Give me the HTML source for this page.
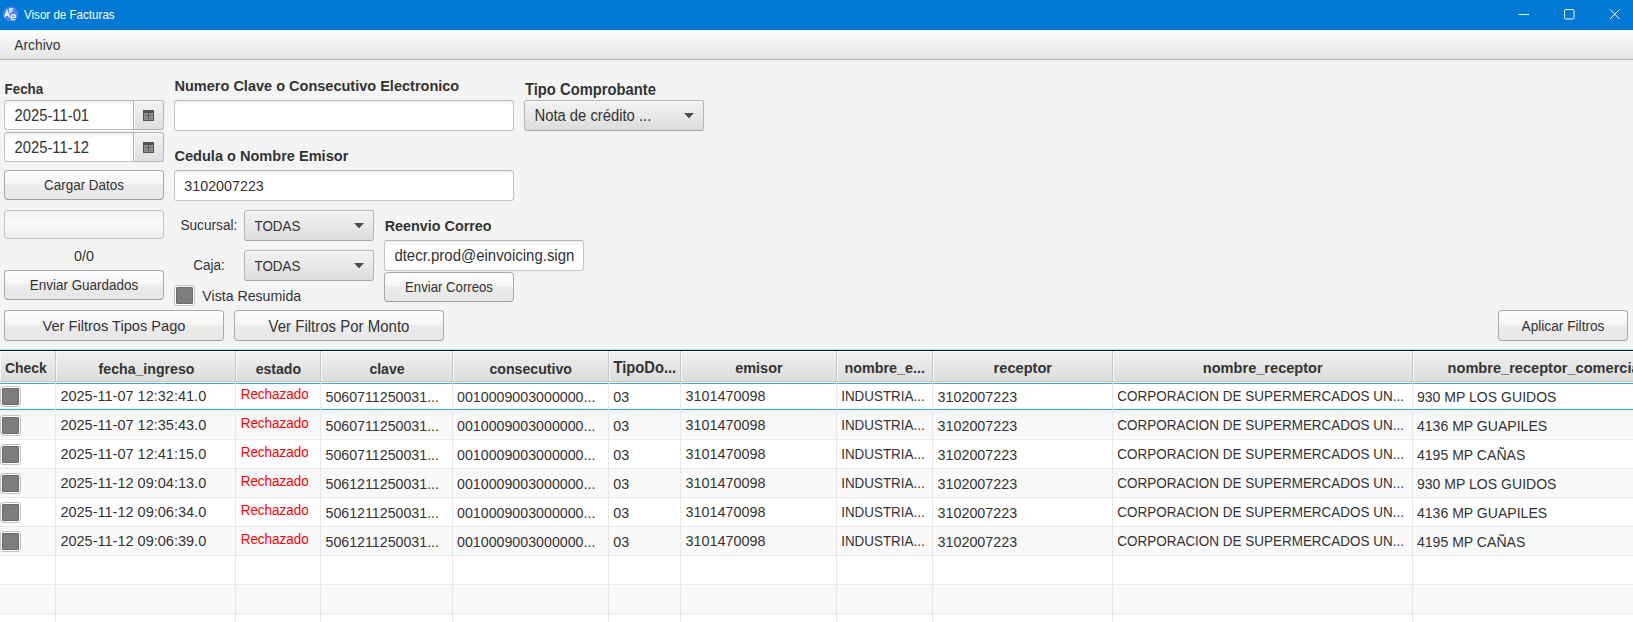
<!DOCTYPE html>
<html><head><meta charset="utf-8"><title>Visor de Facturas</title>
<style>
html,body{margin:0;padding:0}
body{width:1633px;height:622px;overflow:hidden;position:relative;background:#f4f4f4;font-family:'Liberation Sans', sans-serif}
.t{position:absolute;white-space:pre;font-family:'Liberation Sans', sans-serif}
.r{position:absolute}
</style></head><body>
<div class="r" style="left:0px;top:0px;width:1633px;height:30px;background:#0078d4"></div>
<svg class="r" style="left:0px;top:0px" width="24" height="30" viewBox="0 0 24 30">
<circle cx="10.4" cy="14" r="7.6" fill="#4f82ea"/>
<path d="M4.6 17.2 L7 10.8 L9.4 17.2 M5.6 15 L8.4 15" stroke="#fff" stroke-width="1.3" fill="none"/>
<path d="M9.9 13.6 L9.9 8.9 L13.2 8.9 M9.9 11.2 L12.6 11.2" stroke="#fff" stroke-width="1.2" fill="none"/>
<path d="M11.2 17.3 L15.6 17.3 C15.6 15.4 14.6 14.6 13.4 14.6 C12 14.6 11.1 15.7 11.1 17.3 C11.1 19 12.1 20 13.5 20 C14.4 20 15.1 19.6 15.5 19.1" stroke="#fff" stroke-width="1.2" fill="none"/>
</svg>
<div class="t" style="left:24px;top:9.19px;font-size:11.6px;line-height:11.6px;font-weight:400;color:#ffffff;transform:scaleY(1.06);transform-origin:0 9.81px;">Visor de Facturas</div>
<svg class="r" style="left:1500px;top:0" width="133" height="30" viewBox="0 0 133 30">
<line x1="18.5" y1="14.5" x2="29" y2="14.5" stroke="#fff" stroke-width="1"/>
<rect x="64.5" y="9.5" width="9.5" height="9.5" rx="1.2" fill="none" stroke="#fff" stroke-width="1"/>
<path d="M110 9.5 L119.5 19 M119.5 9.5 L110 19" stroke="#fff" stroke-width="1"/>
</svg>
<div class="r" style="left:0px;top:30px;width:1633px;height:29px;background:linear-gradient(#fefefe 0px,#f9f9f9 4px,#e6e6e6 28px,#e9e9e9 29px)"></div>
<div class="r" style="left:0px;top:59px;width:1633px;height:1px;background:#b4b4b4"></div>
<div class="t" style="left:14.3px;top:38.63px;font-size:13.8px;line-height:13.8px;font-weight:400;color:#333333;transform:scaleY(1.06);transform-origin:0 11.67px;">Archivo</div>
<div class="t" style="left:4.5px;top:83.16px;font-size:13.4px;line-height:13.4px;font-weight:700;color:#333333;transform:scaleY(1.06);transform-origin:0 11.34px;">Fecha</div>
<div class="r" style="left:4px;top:100px;width:160px;height:30px;box-sizing:border-box;border:1px solid #c2c2c2;border-top-color:#b4b4b4;border-radius:3px;background:linear-gradient(#efefef 0,#fff 5px)"></div>
<div class="r" style="left:133px;top:100px;width:31px;height:30px;box-sizing:border-box;border:1px solid #b6b6b6;border-radius:0 3px 3px 0;background:linear-gradient(#f3f3f3,#dedede);box-shadow:inset 1px 1px 0 #fafafa"></div>
<svg class="r" style="left:143px;top:110px" width="11" height="11" viewBox="0 0 11 11">
<rect x="0" y="0" width="11" height="11" fill="#525252"/>
<rect x="1" y="3" width="4" height="2.4" fill="#9c9c9c"/><rect x="6" y="3" width="4" height="2.4" fill="#9c9c9c"/>
<rect x="1" y="6" width="4" height="4" fill="#9c9c9c"/><rect x="6" y="6" width="4" height="4" fill="#9c9c9c"/>
<rect x="2.5" y="3" width="1" height="7" fill="#7a7a7a"/><rect x="7.5" y="3" width="1" height="7" fill="#7a7a7a"/>
<rect x="1" y="8" width="9" height="0.8" fill="#7a7a7a"/>
</svg>
<div class="t" style="left:14.5px;top:109.48px;font-size:14.8px;line-height:14.8px;font-weight:400;color:#333333;transform:scaleY(1.06);transform-origin:0 12.52px;">2025-11-01</div>
<div class="r" style="left:4px;top:132px;width:160px;height:30px;box-sizing:border-box;border:1px solid #c2c2c2;border-top-color:#b4b4b4;border-radius:3px;background:linear-gradient(#efefef 0,#fff 5px)"></div>
<div class="r" style="left:133px;top:132px;width:31px;height:30px;box-sizing:border-box;border:1px solid #b6b6b6;border-radius:0 3px 3px 0;background:linear-gradient(#f3f3f3,#dedede);box-shadow:inset 1px 1px 0 #fafafa"></div>
<svg class="r" style="left:143px;top:142px" width="11" height="11" viewBox="0 0 11 11">
<rect x="0" y="0" width="11" height="11" fill="#525252"/>
<rect x="1" y="3" width="4" height="2.4" fill="#9c9c9c"/><rect x="6" y="3" width="4" height="2.4" fill="#9c9c9c"/>
<rect x="1" y="6" width="4" height="4" fill="#9c9c9c"/><rect x="6" y="6" width="4" height="4" fill="#9c9c9c"/>
<rect x="2.5" y="3" width="1" height="7" fill="#7a7a7a"/><rect x="7.5" y="3" width="1" height="7" fill="#7a7a7a"/>
<rect x="1" y="8" width="9" height="0.8" fill="#7a7a7a"/>
</svg>
<div class="t" style="left:14.5px;top:141.48px;font-size:14.8px;line-height:14.8px;font-weight:400;color:#333333;transform:scaleY(1.06);transform-origin:0 12.52px;">2025-11-12</div>
<div class="r" style="left:4px;top:170px;width:160px;height:30px;box-sizing:border-box;border:1px solid #a9a9a9;border-bottom-color:#9c9c9c;border-radius:4px;background:linear-gradient(#fdfdfd 0%,#f5f5f5 47%,#ececec 50%,#e7e7e7 92%,#eaeaea 100%);box-shadow:inset 0 1px 0 #ffffff"></div>
<div class="t" style="left:4px;width:160px;text-align:center;top:178.62px;font-size:13.45px;line-height:13.45px;color:#333;transform:scaleY(1.06);transform-origin:0 11.38px">Cargar Datos</div>
<div class="r" style="left:4px;top:210px;width:160px;height:29px;box-sizing:border-box;border:1px solid #c4c4c4;border-radius:3px;background:linear-gradient(#f0f0f0,#fbfbfb 40%,#eeeeee)"></div>
<div class="t" style="left:4px;width:160px;text-align:center;top:248.90px;font-size:14.3px;line-height:14.3px;color:#333;transform:scaleY(1.06);transform-origin:0 12.1px">0/0</div>
<div class="r" style="left:4px;top:270px;width:160px;height:30px;box-sizing:border-box;border:1px solid #a9a9a9;border-bottom-color:#9c9c9c;border-radius:4px;background:linear-gradient(#fdfdfd 0%,#f5f5f5 47%,#ececec 50%,#e7e7e7 92%,#eaeaea 100%);box-shadow:inset 0 1px 0 #ffffff"></div>
<div class="t" style="left:4px;width:160px;text-align:center;top:278.62px;font-size:13.45px;line-height:13.45px;color:#333;transform:scaleY(1.06);transform-origin:0 11.38px">Enviar Guardados</div>
<div class="t" style="left:174.5px;top:78.71px;font-size:14.53px;line-height:14.53px;font-weight:700;color:#333333;transform:scaleY(1.06);transform-origin:0 12.29px;">Numero Clave o Consecutivo Electronico</div>
<div class="r" style="left:174px;top:100px;width:340px;height:31px;box-sizing:border-box;border:1px solid #c4c4c4;border-top-color:#b8b8b8;border-radius:3px;background:linear-gradient(#f0f0f0 0,#fff 5px)"></div>
<div class="t" style="left:174.5px;top:148.68px;font-size:14.56px;line-height:14.56px;font-weight:700;color:#333333;transform:scaleY(1.06);transform-origin:0 12.32px;">Cedula o Nombre Emisor</div>
<div class="r" style="left:174px;top:170px;width:340px;height:31px;box-sizing:border-box;border:1px solid #c4c4c4;border-top-color:#b8b8b8;border-radius:3px;background:linear-gradient(#f0f0f0 0,#fff 5px)"></div>
<div class="t" style="left:184.3px;top:178.89px;font-size:14.31px;line-height:14.31px;font-weight:400;color:#333333;transform:scaleY(1.06);transform-origin:0 12.11px;">3102007223</div>
<div class="t" style="left:180.4px;top:219.44px;font-size:13.67px;line-height:13.67px;font-weight:400;color:#333333;transform:scaleY(1.06);transform-origin:0 11.56px;">Sucursal:</div>
<div class="r" style="left:244px;top:210px;width:130px;height:31px;box-sizing:border-box;border:1px solid #b5b5b5;border-bottom-color:#a8a8a8;border-radius:3px;background:linear-gradient(#f3f3f3,#dcdcdc);box-shadow:inset 0 1px 0 #fbfbfb"></div>
<div class="t" style="left:254.5px;top:219.65px;font-size:13.42px;line-height:13.42px;font-weight:400;color:#333333;transform:scaleY(1.06);transform-origin:0 11.35px;">TODAS</div>
<svg class="r" style="left:354px;top:222.8px" width="10" height="7" viewBox="0 0 10 7"><path d="M0 1 L10 1 L5 6.4 Z" fill="#fff" opacity="0.6"/><path d="M0 0 L10 0 L5 5.4 Z" fill="#4d4d4d"/></svg>
<div class="t" style="left:193.2px;top:259.19px;font-size:13.49px;line-height:13.49px;font-weight:400;color:#333333;transform:scaleY(1.06);transform-origin:0 11.41px;">Caja:</div>
<div class="r" style="left:244px;top:250px;width:130px;height:31px;box-sizing:border-box;border:1px solid #b5b5b5;border-bottom-color:#a8a8a8;border-radius:3px;background:linear-gradient(#f3f3f3,#dcdcdc);box-shadow:inset 0 1px 0 #fbfbfb"></div>
<div class="t" style="left:254.5px;top:259.65px;font-size:13.42px;line-height:13.42px;font-weight:400;color:#333333;transform:scaleY(1.06);transform-origin:0 11.35px;">TODAS</div>
<svg class="r" style="left:354px;top:262.8px" width="10" height="7" viewBox="0 0 10 7"><path d="M0 1 L10 1 L5 6.4 Z" fill="#fff" opacity="0.6"/><path d="M0 0 L10 0 L5 5.4 Z" fill="#4d4d4d"/></svg>
<div class="r" style="left:174px;top:285px;width:21px;height:21px;box-sizing:border-box;border:1px solid #c2c2c2;border-radius:3px;background:#fcfcfc"></div>
<div class="r" style="left:176px;top:287px;width:17px;height:17px;box-sizing:border-box;border:1px solid #6a6a6a;border-radius:1px;background:#7d7d7d"></div>
<div class="t" style="left:202.3px;top:289.01px;font-size:14.17px;line-height:14.17px;font-weight:400;color:#333333;transform:scaleY(1.06);transform-origin:0 11.99px;">Vista Resumida</div>
<div class="t" style="left:525px;top:82.50px;font-size:14.77px;line-height:14.77px;font-weight:700;color:#333333;transform:scaleY(1.06);transform-origin:0 12.50px;">Tipo Comprobante</div>
<div class="r" style="left:524px;top:100px;width:180px;height:31px;box-sizing:border-box;border:1px solid #b5b5b5;border-bottom-color:#a8a8a8;border-radius:3px;background:linear-gradient(#f3f3f3,#dcdcdc);box-shadow:inset 0 1px 0 #fbfbfb"></div>
<div class="t" style="left:534.5px;top:109.48px;font-size:14.8px;line-height:14.8px;font-weight:400;color:#333333;transform:scaleY(1.06);transform-origin:0 12.52px;">Nota de crédito ...</div>
<svg class="r" style="left:684px;top:112.8px" width="10" height="7" viewBox="0 0 10 7"><path d="M0 1 L10 1 L5 6.4 Z" fill="#fff" opacity="0.6"/><path d="M0 0 L10 0 L5 5.4 Z" fill="#4d4d4d"/></svg>
<div class="t" style="left:384.7px;top:219.34px;font-size:14.37px;line-height:14.37px;font-weight:700;color:#333333;transform:scaleY(1.06);transform-origin:0 12.16px;">Reenvio Correo</div>
<div class="r" style="left:384px;top:240px;width:200px;height:31px;box-sizing:border-box;border:1px solid #c4c4c4;border-top-color:#b8b8b8;border-radius:3px;background:linear-gradient(#f0f0f0 0,#fff 5px)"></div>
<div class="t" style="left:394.4px;top:248.84px;font-size:14.97px;line-height:14.97px;font-weight:400;color:#333333;transform:scaleY(1.06);transform-origin:0 12.66px;">dtecr.prod@einvoicing.sign</div>
<div class="r" style="left:384px;top:272px;width:130px;height:30px;box-sizing:border-box;border:1px solid #a9a9a9;border-bottom-color:#9c9c9c;border-radius:4px;background:linear-gradient(#fdfdfd 0%,#f5f5f5 47%,#ececec 50%,#e7e7e7 92%,#eaeaea 100%);box-shadow:inset 0 1px 0 #ffffff"></div>
<div class="t" style="left:384px;width:130px;text-align:center;top:280.83px;font-size:13.2px;line-height:13.2px;color:#333;transform:scaleY(1.06);transform-origin:0 11.17px">Enviar Correos</div>
<div class="r" style="left:4px;top:310px;width:220px;height:31px;box-sizing:border-box;border:1px solid #a9a9a9;border-bottom-color:#9c9c9c;border-radius:4px;background:linear-gradient(#fdfdfd 0%,#f5f5f5 47%,#ececec 50%,#e7e7e7 92%,#eaeaea 100%);box-shadow:inset 0 1px 0 #ffffff"></div>
<div class="t" style="left:4px;width:220px;text-align:center;top:319.13px;font-size:14.62px;line-height:14.62px;color:#333;transform:scaleY(1.06);transform-origin:0 12.37px">Ver Filtros Tipos Pago</div>
<div class="r" style="left:234px;top:310px;width:210px;height:31px;box-sizing:border-box;border:1px solid #a9a9a9;border-bottom-color:#9c9c9c;border-radius:4px;background:linear-gradient(#fdfdfd 0%,#f5f5f5 47%,#ececec 50%,#e7e7e7 92%,#eaeaea 100%);box-shadow:inset 0 1px 0 #ffffff"></div>
<div class="t" style="left:234px;width:210px;text-align:center;top:318.81px;font-size:15.0px;line-height:15.0px;color:#333;transform:scaleY(1.06);transform-origin:0 12.69px">Ver Filtros Por Monto</div>
<div class="r" style="left:1498px;top:310px;width:130px;height:31px;box-sizing:border-box;border:1px solid #a9a9a9;border-bottom-color:#9c9c9c;border-radius:4px;background:linear-gradient(#fdfdfd 0%,#f5f5f5 47%,#ececec 50%,#e7e7e7 92%,#eaeaea 100%);box-shadow:inset 0 1px 0 #ffffff"></div>
<div class="t" style="left:1498px;width:130px;text-align:center;top:319.71px;font-size:13.7px;line-height:13.7px;color:#333;transform:scaleY(1.06);transform-origin:0 11.59px">Aplicar Filtros</div>
<div class="r" style="left:0px;top:349px;width:1633px;height:1px;background:#aee3f5"></div>
<div class="r" style="left:0px;top:350px;width:1633px;height:1px;background:#0b1a20"></div>
<div class="r" style="left:0px;top:351px;width:1633px;height:271px;background:#ffffff"></div>
<div class="r" style="left:0px;top:351px;width:56px;height:31px;box-sizing:border-box;border-right:1px solid #c8c8c8;border-bottom:1px solid #c8c8c8;background:linear-gradient(#fbfbfb 0,#fbfbfb 1px,#efefef 2px,#dcdcdc 100%);box-shadow:inset 1px 0 0 #f7f7f7"></div>
<div class="t" style="left:5.05px;top:361.82px;font-size:13.93px;line-height:13.93px;font-weight:700;color:#333333;transform:scaleY(1.06);transform-origin:0 11.78px;">Check</div>
<div class="r" style="left:56px;top:351px;width:180px;height:31px;box-sizing:border-box;border-right:1px solid #c8c8c8;border-bottom:1px solid #c8c8c8;background:linear-gradient(#fbfbfb 0,#fbfbfb 1px,#efefef 2px,#dcdcdc 100%);box-shadow:inset 1px 0 0 #f7f7f7"></div>
<div class="t" style="left:98.6px;top:361.65px;font-size:14.13px;line-height:14.13px;font-weight:700;color:#333333;transform:scaleY(1.06);transform-origin:0 11.95px;">fecha_ingreso</div>
<div class="r" style="left:236px;top:351px;width:85px;height:31px;box-sizing:border-box;border-right:1px solid #c8c8c8;border-bottom:1px solid #c8c8c8;background:linear-gradient(#fbfbfb 0,#fbfbfb 1px,#efefef 2px,#dcdcdc 100%);box-shadow:inset 1px 0 0 #f7f7f7"></div>
<div class="t" style="left:255.7px;top:361.68px;font-size:14.09px;line-height:14.09px;font-weight:700;color:#333333;transform:scaleY(1.06);transform-origin:0 11.92px;">estado</div>
<div class="r" style="left:321px;top:351px;width:132px;height:31px;box-sizing:border-box;border-right:1px solid #c8c8c8;border-bottom:1px solid #c8c8c8;background:linear-gradient(#fbfbfb 0,#fbfbfb 1px,#efefef 2px,#dcdcdc 100%);box-shadow:inset 1px 0 0 #f7f7f7"></div>
<div class="t" style="left:369.4px;top:361.70px;font-size:14.07px;line-height:14.07px;font-weight:700;color:#333333;transform:scaleY(1.06);transform-origin:0 11.90px;">clave</div>
<div class="r" style="left:453px;top:351px;width:156px;height:31px;box-sizing:border-box;border-right:1px solid #c8c8c8;border-bottom:1px solid #c8c8c8;background:linear-gradient(#fbfbfb 0,#fbfbfb 1px,#efefef 2px,#dcdcdc 100%);box-shadow:inset 1px 0 0 #f7f7f7"></div>
<div class="t" style="left:489.4px;top:361.61px;font-size:14.17px;line-height:14.17px;font-weight:700;color:#333333;transform:scaleY(1.06);transform-origin:0 11.99px;">consecutivo</div>
<div class="r" style="left:609px;top:351px;width:72px;height:31px;box-sizing:border-box;border-right:1px solid #c8c8c8;border-bottom:1px solid #c8c8c8;background:linear-gradient(#fbfbfb 0,#fbfbfb 1px,#efefef 2px,#dcdcdc 100%);box-shadow:inset 1px 0 0 #f7f7f7"></div>
<div class="t" style="left:613.4px;top:361.12px;font-size:14.75px;line-height:14.75px;font-weight:700;color:#333333;transform:scaleY(1.06);transform-origin:0 12.48px;">TipoDo...</div>
<div class="r" style="left:681px;top:351px;width:156px;height:31px;box-sizing:border-box;border-right:1px solid #c8c8c8;border-bottom:1px solid #c8c8c8;background:linear-gradient(#fbfbfb 0,#fbfbfb 1px,#efefef 2px,#dcdcdc 100%);box-shadow:inset 1px 0 0 #f7f7f7"></div>
<div class="t" style="left:735.2px;top:361.35px;font-size:14.48px;line-height:14.48px;font-weight:700;color:#333333;transform:scaleY(1.06);transform-origin:0 12.25px;">emisor</div>
<div class="r" style="left:837px;top:351px;width:96px;height:31px;box-sizing:border-box;border-right:1px solid #c8c8c8;border-bottom:1px solid #c8c8c8;background:linear-gradient(#fbfbfb 0,#fbfbfb 1px,#efefef 2px,#dcdcdc 100%);box-shadow:inset 1px 0 0 #f7f7f7"></div>
<div class="t" style="left:844.5px;top:361.47px;font-size:14.34px;line-height:14.34px;font-weight:700;color:#333333;transform:scaleY(1.06);transform-origin:0 12.13px;">nombre_e...</div>
<div class="r" style="left:933px;top:351px;width:180px;height:31px;box-sizing:border-box;border-right:1px solid #c8c8c8;border-bottom:1px solid #c8c8c8;background:linear-gradient(#fbfbfb 0,#fbfbfb 1px,#efefef 2px,#dcdcdc 100%);box-shadow:inset 1px 0 0 #f7f7f7"></div>
<div class="t" style="left:993.6px;top:361.23px;font-size:14.62px;line-height:14.62px;font-weight:700;color:#333333;transform:scaleY(1.06);transform-origin:0 12.37px;">receptor</div>
<div class="r" style="left:1113px;top:351px;width:300px;height:31px;box-sizing:border-box;border-right:1px solid #c8c8c8;border-bottom:1px solid #c8c8c8;background:linear-gradient(#fbfbfb 0,#fbfbfb 1px,#efefef 2px,#dcdcdc 100%);box-shadow:inset 1px 0 0 #f7f7f7"></div>
<div class="t" style="left:1202.8px;top:361.26px;font-size:14.59px;line-height:14.59px;font-weight:700;color:#333333;transform:scaleY(1.06);transform-origin:0 12.34px;">nombre_receptor</div>
<div class="r" style="left:1413px;top:351px;width:387px;height:31px;box-sizing:border-box;border-right:1px solid #c8c8c8;border-bottom:1px solid #c8c8c8;background:linear-gradient(#fbfbfb 0,#fbfbfb 1px,#efefef 2px,#dcdcdc 100%);box-shadow:inset 1px 0 0 #f7f7f7"></div>
<div class="t" style="left:1447.6px;top:361.26px;font-size:14.59px;line-height:14.59px;font-weight:700;color:#333333;transform:scaleY(1.06);transform-origin:0 12.34px;">nombre_receptor_comercial</div>
<div class="r" style="left:0px;top:382px;width:1633px;height:29px;background:#ffffff"></div>
<div class="r" style="left:0px;top:410px;width:1633px;height:1px;background:#eaeaea"></div>
<div class="r" style="left:0px;top:383px;width:1633px;height:1px;background:#39aee0"></div>
<div class="r" style="left:0px;top:409px;width:1633px;height:1px;background:#39aee0"></div>
<div class="r" style="left:55px;top:382px;width:1px;height:29px;background:#e8e8e8"></div>
<div class="r" style="left:235px;top:382px;width:1px;height:29px;background:#e8e8e8"></div>
<div class="r" style="left:320px;top:382px;width:1px;height:29px;background:#e8e8e8"></div>
<div class="r" style="left:452px;top:382px;width:1px;height:29px;background:#e8e8e8"></div>
<div class="r" style="left:608px;top:382px;width:1px;height:29px;background:#e8e8e8"></div>
<div class="r" style="left:680px;top:382px;width:1px;height:29px;background:#e8e8e8"></div>
<div class="r" style="left:836px;top:382px;width:1px;height:29px;background:#e8e8e8"></div>
<div class="r" style="left:932px;top:382px;width:1px;height:29px;background:#e8e8e8"></div>
<div class="r" style="left:1112px;top:382px;width:1px;height:29px;background:#e8e8e8"></div>
<div class="r" style="left:1412px;top:382px;width:1px;height:29px;background:#e8e8e8"></div>
<div class="r" style="left:0px;top:386px;width:21px;height:21px;box-sizing:border-box;border:1px solid #c2c2c2;border-radius:3px;background:#fcfcfc"></div>
<div class="r" style="left:2px;top:388px;width:17px;height:17px;box-sizing:border-box;border:1px solid #6a6a6a;border-radius:1px;background:#7d7d7d"></div>
<div class="t" style="left:60.4px;top:389.31px;font-size:14.53px;line-height:14.53px;font-weight:400;color:#333333;transform:scaleY(1.06);transform-origin:0 12.29px;">2025-11-07 12:32:41.0</div>
<div class="t" style="left:240.7px;top:387.83px;font-size:13.44px;line-height:13.44px;font-weight:400;color:#ff0000;transform:scaleY(1.06);transform-origin:0 11.37px;">Rechazado</div>
<div class="t" style="left:325.5px;top:389.58px;font-size:14.21px;line-height:14.21px;font-weight:400;color:#333333;transform:scaleY(1.06);transform-origin:0 12.02px;">5060711250031...</div>
<div class="t" style="left:457px;top:389.56px;font-size:14.23px;line-height:14.23px;font-weight:400;color:#333333;transform:scaleY(1.06);transform-origin:0 12.04px;">0010009003000000...</div>
<div class="t" style="left:613.3px;top:389.50px;font-size:14.3px;line-height:14.3px;font-weight:400;color:#333333;transform:scaleY(1.06);transform-origin:0 12.10px;">03</div>
<div class="t" style="left:685.5px;top:389.43px;font-size:14.38px;line-height:14.38px;font-weight:400;color:#333333;transform:scaleY(1.06);transform-origin:0 12.17px;">3101470098</div>
<div class="t" style="left:841.2px;top:390.25px;font-size:13.42px;line-height:13.42px;font-weight:400;color:#333333;transform:scaleY(1.06);transform-origin:0 11.35px;">INDUSTRIA...</div>
<div class="t" style="left:937.6px;top:389.50px;font-size:14.3px;line-height:14.3px;font-weight:400;color:#333333;transform:scaleY(1.06);transform-origin:0 12.10px;">3102007223</div>
<div class="t" style="left:1117.3px;top:390.20px;font-size:13.47px;line-height:13.47px;font-weight:400;color:#333333;transform:scaleY(1.06);transform-origin:0 11.40px;">CORPORACION DE SUPERMERCADOS UN...</div>
<div class="t" style="left:1417px;top:389.71px;font-size:14.05px;line-height:14.05px;font-weight:400;color:#333333;transform:scaleY(1.06);transform-origin:0 11.89px;">930 MP LOS GUIDOS</div>
<div class="r" style="left:0px;top:411px;width:1633px;height:29px;background:#f9f9f9"></div>
<div class="r" style="left:0px;top:439px;width:1633px;height:1px;background:#eaeaea"></div>
<div class="r" style="left:55px;top:411px;width:1px;height:28px;background:#e8e8e8"></div>
<div class="r" style="left:235px;top:411px;width:1px;height:28px;background:#e8e8e8"></div>
<div class="r" style="left:320px;top:411px;width:1px;height:28px;background:#e8e8e8"></div>
<div class="r" style="left:452px;top:411px;width:1px;height:28px;background:#e8e8e8"></div>
<div class="r" style="left:608px;top:411px;width:1px;height:28px;background:#e8e8e8"></div>
<div class="r" style="left:680px;top:411px;width:1px;height:28px;background:#e8e8e8"></div>
<div class="r" style="left:836px;top:411px;width:1px;height:28px;background:#e8e8e8"></div>
<div class="r" style="left:932px;top:411px;width:1px;height:28px;background:#e8e8e8"></div>
<div class="r" style="left:1112px;top:411px;width:1px;height:28px;background:#e8e8e8"></div>
<div class="r" style="left:1412px;top:411px;width:1px;height:28px;background:#e8e8e8"></div>
<div class="r" style="left:0px;top:415px;width:21px;height:21px;box-sizing:border-box;border:1px solid #c2c2c2;border-radius:3px;background:#fcfcfc"></div>
<div class="r" style="left:2px;top:417px;width:17px;height:17px;box-sizing:border-box;border:1px solid #6a6a6a;border-radius:1px;background:#7d7d7d"></div>
<div class="t" style="left:60.4px;top:418.31px;font-size:14.53px;line-height:14.53px;font-weight:400;color:#333333;transform:scaleY(1.06);transform-origin:0 12.29px;">2025-11-07 12:35:43.0</div>
<div class="t" style="left:240.7px;top:416.83px;font-size:13.44px;line-height:13.44px;font-weight:400;color:#ff0000;transform:scaleY(1.06);transform-origin:0 11.37px;">Rechazado</div>
<div class="t" style="left:325.5px;top:418.58px;font-size:14.21px;line-height:14.21px;font-weight:400;color:#333333;transform:scaleY(1.06);transform-origin:0 12.02px;">5060711250031...</div>
<div class="t" style="left:457px;top:418.56px;font-size:14.23px;line-height:14.23px;font-weight:400;color:#333333;transform:scaleY(1.06);transform-origin:0 12.04px;">0010009003000000...</div>
<div class="t" style="left:613.3px;top:418.50px;font-size:14.3px;line-height:14.3px;font-weight:400;color:#333333;transform:scaleY(1.06);transform-origin:0 12.10px;">03</div>
<div class="t" style="left:685.5px;top:418.43px;font-size:14.38px;line-height:14.38px;font-weight:400;color:#333333;transform:scaleY(1.06);transform-origin:0 12.17px;">3101470098</div>
<div class="t" style="left:841.2px;top:419.25px;font-size:13.42px;line-height:13.42px;font-weight:400;color:#333333;transform:scaleY(1.06);transform-origin:0 11.35px;">INDUSTRIA...</div>
<div class="t" style="left:937.6px;top:418.50px;font-size:14.3px;line-height:14.3px;font-weight:400;color:#333333;transform:scaleY(1.06);transform-origin:0 12.10px;">3102007223</div>
<div class="t" style="left:1117.3px;top:419.20px;font-size:13.47px;line-height:13.47px;font-weight:400;color:#333333;transform:scaleY(1.06);transform-origin:0 11.40px;">CORPORACION DE SUPERMERCADOS UN...</div>
<div class="t" style="left:1417px;top:418.71px;font-size:14.05px;line-height:14.05px;font-weight:400;color:#333333;transform:scaleY(1.06);transform-origin:0 11.89px;">4136 MP GUAPILES</div>
<div class="r" style="left:0px;top:440px;width:1633px;height:29px;background:#ffffff"></div>
<div class="r" style="left:0px;top:468px;width:1633px;height:1px;background:#eaeaea"></div>
<div class="r" style="left:55px;top:440px;width:1px;height:28px;background:#e8e8e8"></div>
<div class="r" style="left:235px;top:440px;width:1px;height:28px;background:#e8e8e8"></div>
<div class="r" style="left:320px;top:440px;width:1px;height:28px;background:#e8e8e8"></div>
<div class="r" style="left:452px;top:440px;width:1px;height:28px;background:#e8e8e8"></div>
<div class="r" style="left:608px;top:440px;width:1px;height:28px;background:#e8e8e8"></div>
<div class="r" style="left:680px;top:440px;width:1px;height:28px;background:#e8e8e8"></div>
<div class="r" style="left:836px;top:440px;width:1px;height:28px;background:#e8e8e8"></div>
<div class="r" style="left:932px;top:440px;width:1px;height:28px;background:#e8e8e8"></div>
<div class="r" style="left:1112px;top:440px;width:1px;height:28px;background:#e8e8e8"></div>
<div class="r" style="left:1412px;top:440px;width:1px;height:28px;background:#e8e8e8"></div>
<div class="r" style="left:0px;top:444px;width:21px;height:21px;box-sizing:border-box;border:1px solid #c2c2c2;border-radius:3px;background:#fcfcfc"></div>
<div class="r" style="left:2px;top:446px;width:17px;height:17px;box-sizing:border-box;border:1px solid #6a6a6a;border-radius:1px;background:#7d7d7d"></div>
<div class="t" style="left:60.4px;top:447.31px;font-size:14.53px;line-height:14.53px;font-weight:400;color:#333333;transform:scaleY(1.06);transform-origin:0 12.29px;">2025-11-07 12:41:15.0</div>
<div class="t" style="left:240.7px;top:445.83px;font-size:13.44px;line-height:13.44px;font-weight:400;color:#ff0000;transform:scaleY(1.06);transform-origin:0 11.37px;">Rechazado</div>
<div class="t" style="left:325.5px;top:447.58px;font-size:14.21px;line-height:14.21px;font-weight:400;color:#333333;transform:scaleY(1.06);transform-origin:0 12.02px;">5060711250031...</div>
<div class="t" style="left:457px;top:447.56px;font-size:14.23px;line-height:14.23px;font-weight:400;color:#333333;transform:scaleY(1.06);transform-origin:0 12.04px;">0010009003000000...</div>
<div class="t" style="left:613.3px;top:447.50px;font-size:14.3px;line-height:14.3px;font-weight:400;color:#333333;transform:scaleY(1.06);transform-origin:0 12.10px;">03</div>
<div class="t" style="left:685.5px;top:447.43px;font-size:14.38px;line-height:14.38px;font-weight:400;color:#333333;transform:scaleY(1.06);transform-origin:0 12.17px;">3101470098</div>
<div class="t" style="left:841.2px;top:448.25px;font-size:13.42px;line-height:13.42px;font-weight:400;color:#333333;transform:scaleY(1.06);transform-origin:0 11.35px;">INDUSTRIA...</div>
<div class="t" style="left:937.6px;top:447.50px;font-size:14.3px;line-height:14.3px;font-weight:400;color:#333333;transform:scaleY(1.06);transform-origin:0 12.10px;">3102007223</div>
<div class="t" style="left:1117.3px;top:448.20px;font-size:13.47px;line-height:13.47px;font-weight:400;color:#333333;transform:scaleY(1.06);transform-origin:0 11.40px;">CORPORACION DE SUPERMERCADOS UN...</div>
<div class="t" style="left:1417px;top:447.71px;font-size:14.05px;line-height:14.05px;font-weight:400;color:#333333;transform:scaleY(1.06);transform-origin:0 11.89px;">4195 MP CAÑAS</div>
<div class="r" style="left:0px;top:469px;width:1633px;height:29px;background:#f9f9f9"></div>
<div class="r" style="left:0px;top:497px;width:1633px;height:1px;background:#eaeaea"></div>
<div class="r" style="left:55px;top:469px;width:1px;height:28px;background:#e8e8e8"></div>
<div class="r" style="left:235px;top:469px;width:1px;height:28px;background:#e8e8e8"></div>
<div class="r" style="left:320px;top:469px;width:1px;height:28px;background:#e8e8e8"></div>
<div class="r" style="left:452px;top:469px;width:1px;height:28px;background:#e8e8e8"></div>
<div class="r" style="left:608px;top:469px;width:1px;height:28px;background:#e8e8e8"></div>
<div class="r" style="left:680px;top:469px;width:1px;height:28px;background:#e8e8e8"></div>
<div class="r" style="left:836px;top:469px;width:1px;height:28px;background:#e8e8e8"></div>
<div class="r" style="left:932px;top:469px;width:1px;height:28px;background:#e8e8e8"></div>
<div class="r" style="left:1112px;top:469px;width:1px;height:28px;background:#e8e8e8"></div>
<div class="r" style="left:1412px;top:469px;width:1px;height:28px;background:#e8e8e8"></div>
<div class="r" style="left:0px;top:473px;width:21px;height:21px;box-sizing:border-box;border:1px solid #c2c2c2;border-radius:3px;background:#fcfcfc"></div>
<div class="r" style="left:2px;top:475px;width:17px;height:17px;box-sizing:border-box;border:1px solid #6a6a6a;border-radius:1px;background:#7d7d7d"></div>
<div class="t" style="left:60.4px;top:476.31px;font-size:14.53px;line-height:14.53px;font-weight:400;color:#333333;transform:scaleY(1.06);transform-origin:0 12.29px;">2025-11-12 09:04:13.0</div>
<div class="t" style="left:240.7px;top:474.83px;font-size:13.44px;line-height:13.44px;font-weight:400;color:#ff0000;transform:scaleY(1.06);transform-origin:0 11.37px;">Rechazado</div>
<div class="t" style="left:325.5px;top:476.58px;font-size:14.21px;line-height:14.21px;font-weight:400;color:#333333;transform:scaleY(1.06);transform-origin:0 12.02px;">5061211250031...</div>
<div class="t" style="left:457px;top:476.56px;font-size:14.23px;line-height:14.23px;font-weight:400;color:#333333;transform:scaleY(1.06);transform-origin:0 12.04px;">0010009003000000...</div>
<div class="t" style="left:613.3px;top:476.50px;font-size:14.3px;line-height:14.3px;font-weight:400;color:#333333;transform:scaleY(1.06);transform-origin:0 12.10px;">03</div>
<div class="t" style="left:685.5px;top:476.43px;font-size:14.38px;line-height:14.38px;font-weight:400;color:#333333;transform:scaleY(1.06);transform-origin:0 12.17px;">3101470098</div>
<div class="t" style="left:841.2px;top:477.25px;font-size:13.42px;line-height:13.42px;font-weight:400;color:#333333;transform:scaleY(1.06);transform-origin:0 11.35px;">INDUSTRIA...</div>
<div class="t" style="left:937.6px;top:476.50px;font-size:14.3px;line-height:14.3px;font-weight:400;color:#333333;transform:scaleY(1.06);transform-origin:0 12.10px;">3102007223</div>
<div class="t" style="left:1117.3px;top:477.20px;font-size:13.47px;line-height:13.47px;font-weight:400;color:#333333;transform:scaleY(1.06);transform-origin:0 11.40px;">CORPORACION DE SUPERMERCADOS UN...</div>
<div class="t" style="left:1417px;top:476.71px;font-size:14.05px;line-height:14.05px;font-weight:400;color:#333333;transform:scaleY(1.06);transform-origin:0 11.89px;">930 MP LOS GUIDOS</div>
<div class="r" style="left:0px;top:498px;width:1633px;height:29px;background:#ffffff"></div>
<div class="r" style="left:0px;top:526px;width:1633px;height:1px;background:#eaeaea"></div>
<div class="r" style="left:55px;top:498px;width:1px;height:28px;background:#e8e8e8"></div>
<div class="r" style="left:235px;top:498px;width:1px;height:28px;background:#e8e8e8"></div>
<div class="r" style="left:320px;top:498px;width:1px;height:28px;background:#e8e8e8"></div>
<div class="r" style="left:452px;top:498px;width:1px;height:28px;background:#e8e8e8"></div>
<div class="r" style="left:608px;top:498px;width:1px;height:28px;background:#e8e8e8"></div>
<div class="r" style="left:680px;top:498px;width:1px;height:28px;background:#e8e8e8"></div>
<div class="r" style="left:836px;top:498px;width:1px;height:28px;background:#e8e8e8"></div>
<div class="r" style="left:932px;top:498px;width:1px;height:28px;background:#e8e8e8"></div>
<div class="r" style="left:1112px;top:498px;width:1px;height:28px;background:#e8e8e8"></div>
<div class="r" style="left:1412px;top:498px;width:1px;height:28px;background:#e8e8e8"></div>
<div class="r" style="left:0px;top:502px;width:21px;height:21px;box-sizing:border-box;border:1px solid #c2c2c2;border-radius:3px;background:#fcfcfc"></div>
<div class="r" style="left:2px;top:504px;width:17px;height:17px;box-sizing:border-box;border:1px solid #6a6a6a;border-radius:1px;background:#7d7d7d"></div>
<div class="t" style="left:60.4px;top:505.31px;font-size:14.53px;line-height:14.53px;font-weight:400;color:#333333;transform:scaleY(1.06);transform-origin:0 12.29px;">2025-11-12 09:06:34.0</div>
<div class="t" style="left:240.7px;top:503.83px;font-size:13.44px;line-height:13.44px;font-weight:400;color:#ff0000;transform:scaleY(1.06);transform-origin:0 11.37px;">Rechazado</div>
<div class="t" style="left:325.5px;top:505.58px;font-size:14.21px;line-height:14.21px;font-weight:400;color:#333333;transform:scaleY(1.06);transform-origin:0 12.02px;">5061211250031...</div>
<div class="t" style="left:457px;top:505.56px;font-size:14.23px;line-height:14.23px;font-weight:400;color:#333333;transform:scaleY(1.06);transform-origin:0 12.04px;">0010009003000000...</div>
<div class="t" style="left:613.3px;top:505.50px;font-size:14.3px;line-height:14.3px;font-weight:400;color:#333333;transform:scaleY(1.06);transform-origin:0 12.10px;">03</div>
<div class="t" style="left:685.5px;top:505.43px;font-size:14.38px;line-height:14.38px;font-weight:400;color:#333333;transform:scaleY(1.06);transform-origin:0 12.17px;">3101470098</div>
<div class="t" style="left:841.2px;top:506.25px;font-size:13.42px;line-height:13.42px;font-weight:400;color:#333333;transform:scaleY(1.06);transform-origin:0 11.35px;">INDUSTRIA...</div>
<div class="t" style="left:937.6px;top:505.50px;font-size:14.3px;line-height:14.3px;font-weight:400;color:#333333;transform:scaleY(1.06);transform-origin:0 12.10px;">3102007223</div>
<div class="t" style="left:1117.3px;top:506.20px;font-size:13.47px;line-height:13.47px;font-weight:400;color:#333333;transform:scaleY(1.06);transform-origin:0 11.40px;">CORPORACION DE SUPERMERCADOS UN...</div>
<div class="t" style="left:1417px;top:505.71px;font-size:14.05px;line-height:14.05px;font-weight:400;color:#333333;transform:scaleY(1.06);transform-origin:0 11.89px;">4136 MP GUAPILES</div>
<div class="r" style="left:0px;top:527px;width:1633px;height:29px;background:#f9f9f9"></div>
<div class="r" style="left:0px;top:555px;width:1633px;height:1px;background:#eaeaea"></div>
<div class="r" style="left:55px;top:527px;width:1px;height:28px;background:#e8e8e8"></div>
<div class="r" style="left:235px;top:527px;width:1px;height:28px;background:#e8e8e8"></div>
<div class="r" style="left:320px;top:527px;width:1px;height:28px;background:#e8e8e8"></div>
<div class="r" style="left:452px;top:527px;width:1px;height:28px;background:#e8e8e8"></div>
<div class="r" style="left:608px;top:527px;width:1px;height:28px;background:#e8e8e8"></div>
<div class="r" style="left:680px;top:527px;width:1px;height:28px;background:#e8e8e8"></div>
<div class="r" style="left:836px;top:527px;width:1px;height:28px;background:#e8e8e8"></div>
<div class="r" style="left:932px;top:527px;width:1px;height:28px;background:#e8e8e8"></div>
<div class="r" style="left:1112px;top:527px;width:1px;height:28px;background:#e8e8e8"></div>
<div class="r" style="left:1412px;top:527px;width:1px;height:28px;background:#e8e8e8"></div>
<div class="r" style="left:0px;top:531px;width:21px;height:21px;box-sizing:border-box;border:1px solid #c2c2c2;border-radius:3px;background:#fcfcfc"></div>
<div class="r" style="left:2px;top:533px;width:17px;height:17px;box-sizing:border-box;border:1px solid #6a6a6a;border-radius:1px;background:#7d7d7d"></div>
<div class="t" style="left:60.4px;top:534.31px;font-size:14.53px;line-height:14.53px;font-weight:400;color:#333333;transform:scaleY(1.06);transform-origin:0 12.29px;">2025-11-12 09:06:39.0</div>
<div class="t" style="left:240.7px;top:532.83px;font-size:13.44px;line-height:13.44px;font-weight:400;color:#ff0000;transform:scaleY(1.06);transform-origin:0 11.37px;">Rechazado</div>
<div class="t" style="left:325.5px;top:534.58px;font-size:14.21px;line-height:14.21px;font-weight:400;color:#333333;transform:scaleY(1.06);transform-origin:0 12.02px;">5061211250031...</div>
<div class="t" style="left:457px;top:534.56px;font-size:14.23px;line-height:14.23px;font-weight:400;color:#333333;transform:scaleY(1.06);transform-origin:0 12.04px;">0010009003000000...</div>
<div class="t" style="left:613.3px;top:534.50px;font-size:14.3px;line-height:14.3px;font-weight:400;color:#333333;transform:scaleY(1.06);transform-origin:0 12.10px;">03</div>
<div class="t" style="left:685.5px;top:534.43px;font-size:14.38px;line-height:14.38px;font-weight:400;color:#333333;transform:scaleY(1.06);transform-origin:0 12.17px;">3101470098</div>
<div class="t" style="left:841.2px;top:535.25px;font-size:13.42px;line-height:13.42px;font-weight:400;color:#333333;transform:scaleY(1.06);transform-origin:0 11.35px;">INDUSTRIA...</div>
<div class="t" style="left:937.6px;top:534.50px;font-size:14.3px;line-height:14.3px;font-weight:400;color:#333333;transform:scaleY(1.06);transform-origin:0 12.10px;">3102007223</div>
<div class="t" style="left:1117.3px;top:535.20px;font-size:13.47px;line-height:13.47px;font-weight:400;color:#333333;transform:scaleY(1.06);transform-origin:0 11.40px;">CORPORACION DE SUPERMERCADOS UN...</div>
<div class="t" style="left:1417px;top:534.71px;font-size:14.05px;line-height:14.05px;font-weight:400;color:#333333;transform:scaleY(1.06);transform-origin:0 11.89px;">4195 MP CAÑAS</div>
<div class="r" style="left:0px;top:556px;width:1633px;height:29px;background:#ffffff"></div>
<div class="r" style="left:0px;top:584px;width:1633px;height:1px;background:#eaeaea"></div>
<div class="r" style="left:55px;top:556px;width:1px;height:28px;background:#e8e8e8"></div>
<div class="r" style="left:235px;top:556px;width:1px;height:28px;background:#e8e8e8"></div>
<div class="r" style="left:320px;top:556px;width:1px;height:28px;background:#e8e8e8"></div>
<div class="r" style="left:452px;top:556px;width:1px;height:28px;background:#e8e8e8"></div>
<div class="r" style="left:608px;top:556px;width:1px;height:28px;background:#e8e8e8"></div>
<div class="r" style="left:680px;top:556px;width:1px;height:28px;background:#e8e8e8"></div>
<div class="r" style="left:836px;top:556px;width:1px;height:28px;background:#e8e8e8"></div>
<div class="r" style="left:932px;top:556px;width:1px;height:28px;background:#e8e8e8"></div>
<div class="r" style="left:1112px;top:556px;width:1px;height:28px;background:#e8e8e8"></div>
<div class="r" style="left:1412px;top:556px;width:1px;height:28px;background:#e8e8e8"></div>
<div class="r" style="left:0px;top:585px;width:1633px;height:29px;background:#f9f9f9"></div>
<div class="r" style="left:0px;top:613px;width:1633px;height:1px;background:#eaeaea"></div>
<div class="r" style="left:55px;top:585px;width:1px;height:28px;background:#e8e8e8"></div>
<div class="r" style="left:235px;top:585px;width:1px;height:28px;background:#e8e8e8"></div>
<div class="r" style="left:320px;top:585px;width:1px;height:28px;background:#e8e8e8"></div>
<div class="r" style="left:452px;top:585px;width:1px;height:28px;background:#e8e8e8"></div>
<div class="r" style="left:608px;top:585px;width:1px;height:28px;background:#e8e8e8"></div>
<div class="r" style="left:680px;top:585px;width:1px;height:28px;background:#e8e8e8"></div>
<div class="r" style="left:836px;top:585px;width:1px;height:28px;background:#e8e8e8"></div>
<div class="r" style="left:932px;top:585px;width:1px;height:28px;background:#e8e8e8"></div>
<div class="r" style="left:1112px;top:585px;width:1px;height:28px;background:#e8e8e8"></div>
<div class="r" style="left:1412px;top:585px;width:1px;height:28px;background:#e8e8e8"></div>
<div class="r" style="left:0px;top:614px;width:1633px;height:29px;background:#ffffff"></div>
<div class="r" style="left:0px;top:642px;width:1633px;height:1px;background:#eaeaea"></div>
<div class="r" style="left:55px;top:614px;width:1px;height:28px;background:#e8e8e8"></div>
<div class="r" style="left:235px;top:614px;width:1px;height:28px;background:#e8e8e8"></div>
<div class="r" style="left:320px;top:614px;width:1px;height:28px;background:#e8e8e8"></div>
<div class="r" style="left:452px;top:614px;width:1px;height:28px;background:#e8e8e8"></div>
<div class="r" style="left:608px;top:614px;width:1px;height:28px;background:#e8e8e8"></div>
<div class="r" style="left:680px;top:614px;width:1px;height:28px;background:#e8e8e8"></div>
<div class="r" style="left:836px;top:614px;width:1px;height:28px;background:#e8e8e8"></div>
<div class="r" style="left:932px;top:614px;width:1px;height:28px;background:#e8e8e8"></div>
<div class="r" style="left:1112px;top:614px;width:1px;height:28px;background:#e8e8e8"></div>
<div class="r" style="left:1412px;top:614px;width:1px;height:28px;background:#e8e8e8"></div>
</body></html>
